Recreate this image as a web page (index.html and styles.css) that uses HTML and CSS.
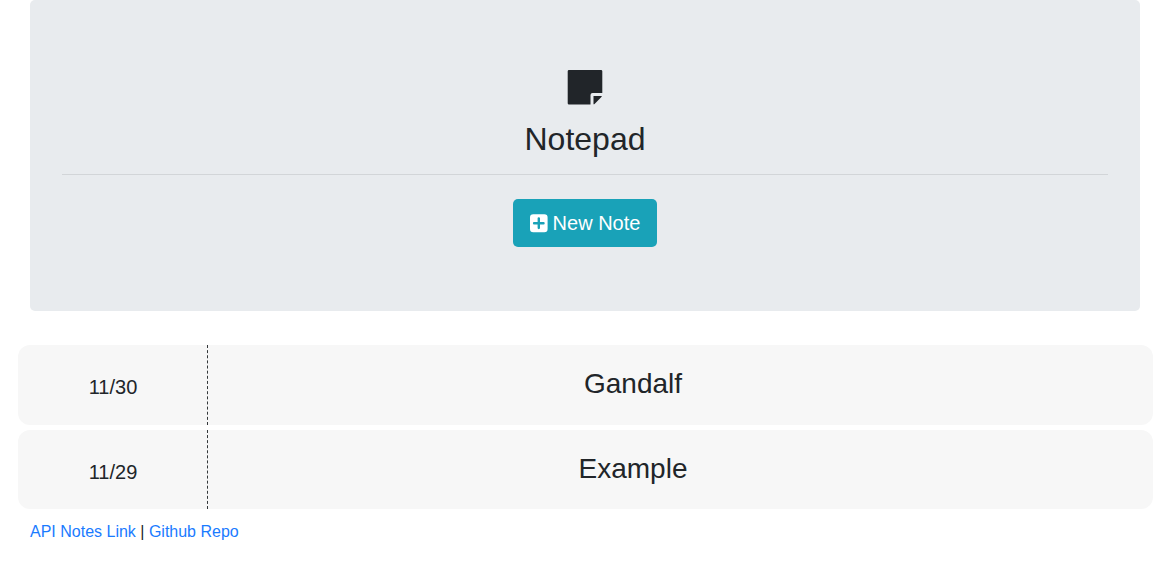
FILE: index.html
```html
<!DOCTYPE html>
<html lang="en">
<head>
<meta charset="utf-8">
<title>Notepad</title>
<link rel="stylesheet" href="styles.css">
</head>
<body>
<div class="container">
  <header class="jumbotron">
    <svg class="note-icon" viewBox="0 0 36 40"><path d="M2 3h32a1.300 1.300 0 0 1 1.300 1.300V26H25.500a2 2 0 0 0-2 2v9.500H2A1.300 1.300 0 0 1 .7 36.200V4.300A1.300 1.300 0 0 1 2 3zM26.500 29h8.300q0 .6-.4 1L27.800 36.800q-.5.500-1.300.5z"/></svg>
    <h1 class="title">Notepad</h1>
    <hr class="rule">
    <a class="button" href="#"><svg class="plus-icon" viewBox="0 0 18 20"><path fill-rule="evenodd" d="M3.300 1.200h11A3.300 3.300 0 0 1 17.600 4.500v11.400a3.300 3.300 0 0 1-3.300 3.300h-11A3.300 3.300 0 0 1 0 15.900V4.500A3.300 3.300 0 0 1 3.300 1.200zM7.600 5.300v3.700H4q-1.100 0-1.100 1.200T4 11.400h3.600v3.700q0 1.100 1.200 1.100t1.200-1.100v-3.700h3.600q1.100 0 1.100-1.200T13.600 9H10V5.300q0-1.100-1.200-1.100T7.600 5.300z"/></svg>New Note</a>
  </header>
  <main class="notes">
    <article class="note"><div class="date">11/30</div><h2 class="name">Gandalf</h2></article>
    <article class="note"><div class="date">11/29</div><h2 class="name">Example</h2></article>
  </main>
  <footer class="footer"><a class="link" href="#">API Notes Link</a> | <a class="link" href="#">Github Repo</a></footer>
</div>
</body>
</html>
```
FILE: styles.css
```css
* { box-sizing: border-box; }
body { margin: 0; background: #fff; color: #212529; font: 16px/24px "Liberation Sans", Arial, sans-serif; }
.container { padding: 0 22px 0 30px; }
.jumbotron { display: flex; flex-direction: column; align-items: center; height: 310.600px; padding: 67px 32px 0; border-radius: 5px; background: #e8ebee; }
.note-icon { width: 36px; height: 40px; fill: currentColor; }
.title { margin: 13px 0 0; font-size: 32px; line-height: 38px; font-weight: 500; }
.rule { width: 100%; margin: 16px 0 24px; border: 0; border-top: 1px solid #d2d5d8; }
.button { display: flex; align-items: center; justify-content: center; gap: 5px; width: 144px; height: 48px; border-radius: 5px; background: #19a2b8; color: #fff; font-size: 20px; text-decoration: none; }
.plus-icon { width: 18px; height: 20px; fill: currentColor; }
.notes { display: grid; gap: 5px; margin: 34.900px -13px 0 -12px; }
.note { display: grid; grid-template-columns: 190px 1fr; height: 79.400px; border-radius: 12px; background: #f7f7f7; text-align: center; }
.date { display: flex; align-items: center; justify-content: center; padding: 4.400px 0 0 1px; border-right: 1px dashed #33373a; font-size: 20px; }
.name { margin: 21.900px 0 0; padding-right: 95px; font-size: 28px; line-height: 33px; font-weight: 500; }
.footer { margin-top: 10.400px; }
.link { color: #1a7bff; text-decoration: none; }
```
